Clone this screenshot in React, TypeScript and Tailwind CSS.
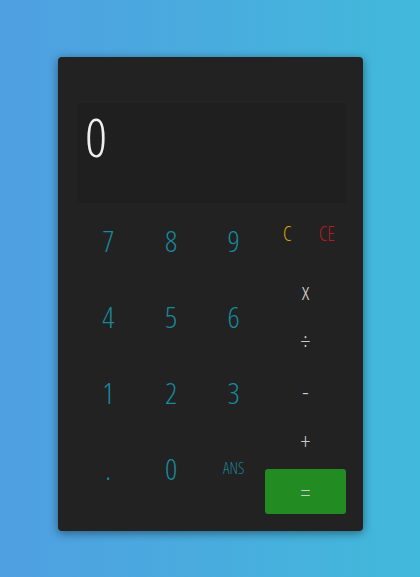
import React, { useState } from 'react';

const digitRows = [
  ['7', '8', '9'],
  ['4', '5', '6'],
  ['1', '2', '3'],
  ['.', '0', 'ANS'],
];

const ops = ['x', '÷', '-', '+'];

export default function App() {
  const [display, setDisplay] = useState('0');

  const press = (key: string) => {
    if (key === 'C' || key === 'CE') {
      setDisplay('0');
      return;
    }
    setDisplay((d) => (d === '0' ? key : d + key));
  };

  return (
    <div className="min-h-[577px] w-full bg-gradient-to-r from-[#4f9fe1] to-[#41b9db] pt-[57px]">
      <div
        className="ml-[58px] flex h-[474px] w-[305px] flex-col rounded-[4px] bg-[#222222] pl-[19px] pr-[17px] pt-[46px] shadow-[0_2px_10px_rgba(0,0,0,0.45)]"
        style={{ fontFamily: "'Open Sans', 'Liberation Sans', sans-serif" }}
      >
        {/* Display */}
        <div className="h-[100px] w-full bg-[#1f1f1f] px-[8px] pt-[2px]">
          <span className="font-stretch-condensed text-[54px] font-light leading-[62px] text-[#eeeeee]">
            {display}
          </span>
        </div>

        {/* Keypad */}
        <div className="flex items-start">
          <div className="-mt-[1px] grid w-[188px] grid-cols-3">
            {digitRows.flat().map((key) => (
              <button
                key={key}
                onClick={() => press(key)}
                className={`flex h-[76px] items-center justify-center font-stretch-condensed font-light ${
                  key === 'ANS' ? 'text-[16px] text-[#1b7f90]' : 'text-[30px] text-[#17899b]'
                }`}
              >
                {key}
              </button>
            ))}
          </div>

          <div className="flex flex-1 flex-col">
            <div className="mt-[6px] flex h-[50px] items-center justify-between pl-[18px] pr-[11px] font-stretch-condensed text-[20px] font-light">
              <button onClick={() => press('C')} className="text-[#d1a60a]">C</button>
              <button onClick={() => press('CE')} className="text-[#b71c1c]">CE</button>
            </div>
            <div className="mt-[7px] flex flex-col">
              {ops.map((op) => (
                <button
                  key={op}
                  onClick={() => press(op)}
                  className="flex h-[50px] items-center justify-center font-stretch-condensed text-[24px] font-light text-[#cccccc]"
                >
                  {op}
                </button>
              ))}
            </div>
            <button className="mt-[3px] flex h-[45px] items-center justify-center rounded-[3px] bg-[#228b22] font-stretch-condensed text-[24px] font-light text-[#cccccc]">
              =
            </button>
          </div>
        </div>
      </div>
    </div>
  );
}
